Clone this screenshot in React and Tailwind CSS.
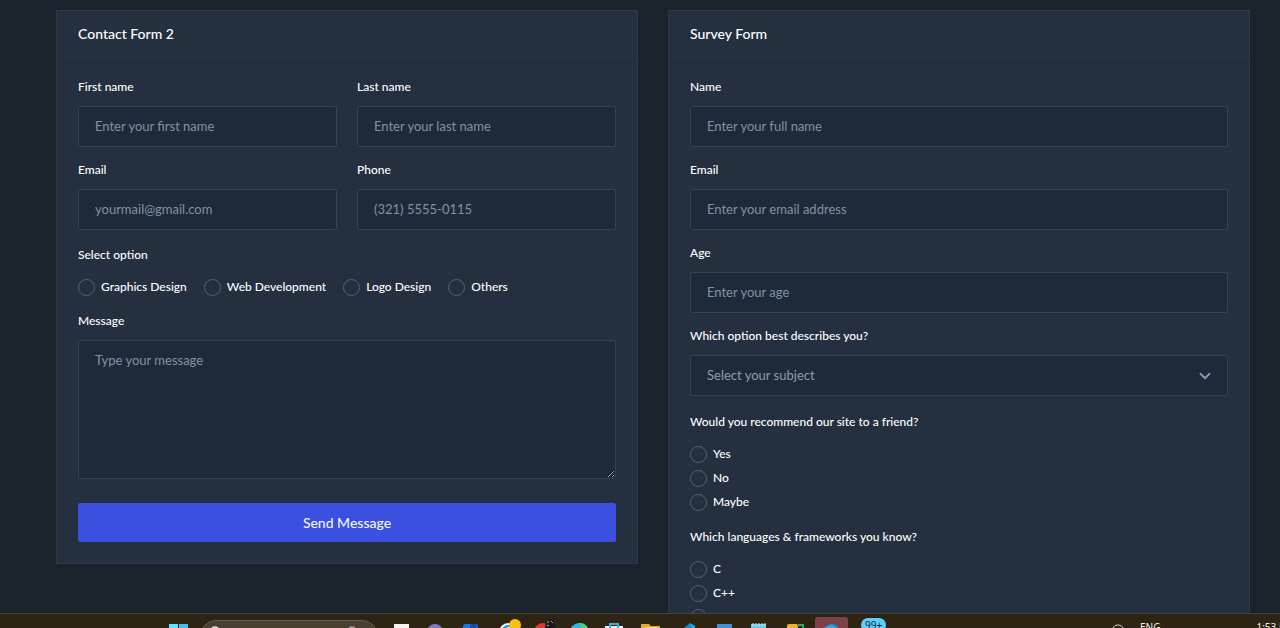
import React from 'react';
import { ChevronDown } from 'lucide-react';

const inputStyle =
    'block w-full rounded-xs border border-[#364251] bg-[#1d2a39] px-4 text-[13px] text-[#dee4ee] placeholder-[#8391a2] outline-none focus:border-[#3c50e0]';

const Card = ({ title, children }) => (
    <section className="min-w-0 border border-[#2e3a47] bg-[#24303f]">
        <header className="flex h-[47px] items-center border-b border-[#293544] px-[21px]">
            <h3 className="text-sm font-medium text-white">{title}</h3>
        </header>
        {children}
    </section>
);

const Label = ({ htmlFor, children }) => (
    <label htmlFor={htmlFor} className="mb-2.5 block text-xs leading-[18px] font-medium text-white">
        {children}
    </label>
);

const Field = ({ id, label, type = 'text', placeholder }) => (
    <div>
        <Label htmlFor={id}>{label}</Label>
        <input id={id} type={type} placeholder={placeholder} className={`${inputStyle} h-[41px] pb-0.5`} />
    </div>
);

const RadioGroup = ({ legend, name, options, listClass }) => (
    <fieldset>
        <legend className="mb-3.5 text-xs leading-[18px] font-medium text-white">{legend}</legend>
        <div className={listClass}>
            {options.map((option) => (
                <label key={option} className="flex h-[18px] cursor-pointer items-center gap-1.5 text-xs font-medium text-white">
                    <input
                        type="radio"
                        name={name}
                        value={option}
                        className="size-[17px] appearance-none rounded-full border border-[#566272] checked:border-4 checked:border-[#3c50e0]"
                    />
                    {option}
                </label>
            ))}
        </div>
    </fieldset>
);

const ContactForm = () => (
    <Card title="Contact Form 2">
        <form className="px-[21px] pt-5 pb-[21px]">
            <div className="mb-4 grid grid-cols-2 gap-x-5 gap-y-3.5">
                <Field id="first-name" label="First name" placeholder="Enter your first name" />
                <Field id="last-name" label="Last name" placeholder="Enter your last name" />
                <Field id="contact-email" label="Email" type="email" placeholder="yourmail@gmail.com" />
                <Field id="phone" label="Phone" type="tel" placeholder="(321) 5555-0115" />
            </div>
            <RadioGroup
                legend="Select option"
                name="service"
                options={['Graphics Design', 'Web Development', 'Logo Design', 'Others']}
                listClass="flex flex-wrap gap-x-[17px] gap-y-1.5"
            />
            <div className="mt-4 mb-6">
                <Label htmlFor="message">Message</Label>
                <textarea id="message" placeholder="Type your message" className={`${inputStyle} h-[139px] py-2.5`} />
            </div>
            <button type="submit" className="h-[39px] w-full rounded-xs bg-[#3c50e0] text-sm font-medium text-[#eff4fb]">
                Send Message
            </button>
        </form>
    </Card>
);

const SurveyForm = () => (
    <Card title="Survey Form">
        <form className="flex flex-col gap-[17px] px-[21px] py-5">
            <div className="flex flex-col gap-3.5">
                <Field id="name" label="Name" placeholder="Enter your full name" />
                <Field id="survey-email" label="Email" type="email" placeholder="Enter your email address" />
                <Field id="age" label="Age" placeholder="Enter your age" />
                <div>
                    <Label htmlFor="subject">Which option best describes you?</Label>
                    <div className="grid items-center">
                        <select
                            id="subject"
                            defaultValue=""
                            className="col-start-1 row-start-1 h-[41px] w-full appearance-none rounded-xs border border-[#364251] bg-[#1d2a39] px-4 text-[13px] text-[#8f9baa] outline-none"
                        >
                            <option value="">Select your subject</option>
                            <option value="student">Student</option>
                            <option value="developer">Developer</option>
                        </select>
                        <ChevronDown
                            className="pointer-events-none col-start-1 row-start-1 mr-3.5 size-[18px] justify-self-end text-[#8a99af]"
                            strokeWidth={2.4}
                        />
                    </div>
                </div>
            </div>
            <RadioGroup
                legend="Would you recommend our site to a friend?"
                name="recommend"
                options={['Yes', 'No', 'Maybe']}
                listClass="flex flex-col gap-1.5"
            />
            <RadioGroup
                legend="Which languages & frameworks you know?"
                name="languages"
                options={['C', 'C++', 'Java', 'Python']}
                listClass="flex flex-col gap-1.5"
            />
        </form>
    </Card>
);

// Each drawing lives in a 36x14 cell, only the top of the icon is visible
const apps = [
    { name: 'Task view', art: <path d="M11 10h15v4H11z" fill="#f5f3f0" /> },
    { name: 'Chat', art: <circle cx="16" cy="18" r="8" fill="#8378bd" /> },
    {
        name: 'Phone Link',
        art: (
            <>
                <rect x="8" y="10" width="15" height="8" rx="3" fill="#1976e8" />
                <path d="M15 10h5l3 4h-8z" fill="#1649a8" />
            </>
        ),
    },
    {
        name: 'Chrome',
        art: (
            <>
                <circle cx="17" cy="18" r="9" fill="#e9f2f5" />
                <circle cx="18" cy="19" r="7" fill="none" stroke="#168bd8" strokeWidth="2" />
                <circle cx="24" cy="11" r="6" fill="#fbbf12" />
            </>
        ),
    },
    {
        name: 'Media',
        art: (
            <>
                <circle cx="16" cy="18" r="9" fill="#db3838" />
                <path d="M18 14l1-6 2-1 1-2 3 1 2-1v5l2 4z" fill="#17191b" />
                <path d="M20 8h2M24 7l2 2M20 12l2-1" stroke="#a9b0ae" />
            </>
        ),
    },
    {
        name: 'Edge',
        art: (
            <>
                <circle cx="16" cy="18" r="9" fill="#2ab8d8" />
                <path d="M16 9a9 9 0 0 1 9 5h-7z" fill="#4bcf83" />
            </>
        ),
    },
    {
        name: 'Store',
        art: (
            <>
                <path d="M6 14v-2h18v2z" fill="#e5f4fa" />
                <path d="M11 14v-4h8v4" fill="none" stroke="#38afe0" strokeWidth="2" />
            </>
        ),
    },
    {
        name: 'Explorer',
        art: (
            <>
                <path d="M6 10h8l2 2h9v2H6z" fill="#e8ab20" />
                <path d="M10 14h12v-1H10z" fill="#ffd866" />
            </>
        ),
    },
    {
        name: 'Azure',
        art: (
            <>
                <path d="M13 14l6-5 5 5z" fill="#1689c4" />
                <path d="M19 9l5 3v2h-3z" fill="#23addd" />
            </>
        ),
    },
    { name: 'Desktop', art: <path d="M10 10h15v4H10z" fill="#428fd8" /> },
    {
        name: 'Notepad',
        art: (
            <>
                <path d="M8 10h15v4H8z" fill="#64cce9" />
                <path d="M10 9v3M13 9v3M16 9v3M19 9v3M22 9v3" stroke="#d0f2fa" />
            </>
        ),
    },
    {
        name: 'Database',
        art: (
            <>
                <rect x="8" y="10" width="11" height="8" rx="2" fill="#f1ae37" />
                <path d="M19 11h5v3" fill="none" stroke="#39a852" strokeWidth="2" />
            </>
        ),
    },
    {
        name: 'VS Code',
        art: (
            <>
                <rect x="0" y="3" width="33" height="18" rx="3" fill="#7e4147" />
                <circle cx="17" cy="17" r="7" fill="#2888d6" />
                <path d="M8 14l8-3 7 3z" fill="#31a8e8" />
            </>
        ),
    },
];

const Taskbar = () => (
    <footer className="flex h-[15px] shrink-0 items-start overflow-hidden border-t border-[#45443a] bg-[#2d2414] pl-[168px] font-['Noto_Sans',sans-serif]">
        <button type="button" aria-label="Start" className="mr-3 shrink-0">
            <svg width="20" height="14">
                <path d="M1 10h9v4H1z" fill="#5de4fa" />
                <path d="M11 10h9v4h-9z" fill="#45bfee" />
            </svg>
        </button>
        <button type="button" aria-label="Search" className="mt-1.5 mr-[5px] flex h-8 w-[178px] shrink-0 justify-between rounded-full border border-[#655b4c] bg-[#4a4031] px-2.5">
            <svg width="10" height="14">
                <circle cx="4" cy="10" r="4" fill="none" stroke="#eeeae2" strokeWidth="1.5" />
            </svg>
            <svg width="26" height="14">
                <circle cx="11" cy="9" r="4" fill="#85929a" />
                <circle cx="12" cy="8" r="2" fill="#c27b45" />
            </svg>
        </button>
        {apps.map((app) => (
            <button key={app.name} type="button" aria-label={app.name} className="w-9 shrink basis-9">
                <svg width="36" height="14">{app.art}</svg>
            </button>
        ))}
        <button type="button" aria-label="WhatsApp" className="relative h-8 w-9 shrink-0">
            <svg width="36" height="14">
                <circle cx="16" cy="18" r="9" fill="#27ad50" />
            </svg>
            <span className="absolute top-1 left-2.5 rounded-full bg-[#60cdff] px-1 text-[10px] leading-[14px] text-[#102c3c]">99+</span>
        </button>
        <div className="ml-auto flex shrink-0 text-[10px] text-[#f2eee7]">
            <svg width="12" height="14" className="mr-4">
                <path d="M1 15a5 4 0 0 1 10 0" fill="none" stroke="#d8d3c8" />
            </svg>
            <span className="mt-1.5 mr-24 leading-[14px]">ENG</span>
            <span className="mt-1.5 -mr-3.5 leading-[14px] whitespace-nowrap">1:53 PM</span>
        </div>
    </footer>
);

const App = () => {
    return (
        <div className="flex h-screen flex-col overflow-hidden bg-[#1a222c] font-[Lato,sans-serif]">
            <main className="min-h-0 flex-1 overflow-hidden pt-2.5 pr-[30px] pl-14">
                <div className="grid grid-cols-2 items-start gap-[30px]">
                    <ContactForm />
                    <SurveyForm />
                </div>
            </main>
            <Taskbar />
        </div>
    );
};

export default App;
